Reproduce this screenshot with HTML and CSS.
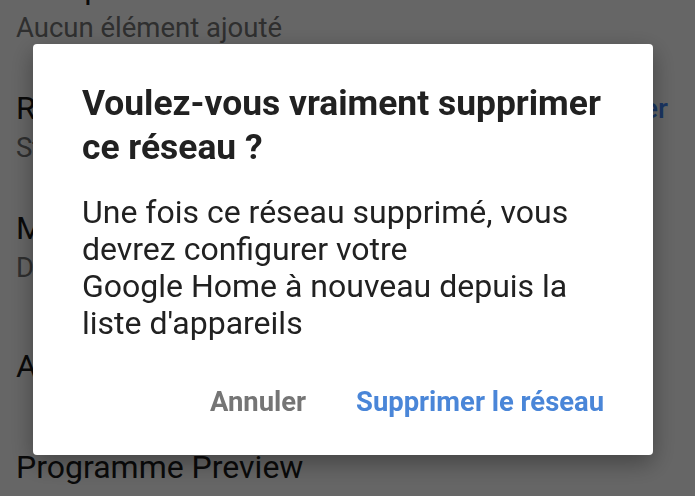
FILE: index.html
```html
<!DOCTYPE html>
<html>
<head>
  <title>Paramètres du réseau</title>
  <meta charset="utf-8">
  <link rel="stylesheet" href="styles.css">
</head>
<body>
  <div class="list">
    <div class="item">
      <div class="text">
        <div class="title">Groupes</div>
        <div class="sub">Aucun élément ajouté</div>
      </div>
    </div>
    <div class="item">
      <div class="text">
        <div class="title">Réseau invité</div>
        <div class="sub">Statut : désactivé</div>
      </div>
      <span class="action">Configurer</span>
    </div>
    <div class="item">
      <div class="text">
        <div class="title">Mises à jour</div>
        <div class="sub">Désactivées</div>
      </div>
    </div>
    <div class="item single">
      <div class="title">Aide et commentaires</div>
    </div>
    <div class="item single">
      <div class="title">Programme Preview</div>
    </div>
  </div>

  <div class="overlay">
    <div class="dialog">
      <h2 class="dialog-title">Voulez-vous vraiment supprimer<br>ce réseau ?</h2>
      <p class="dialog-body">Une fois ce réseau supprimé, vous<br>devrez configurer votre<br>Google Home à nouveau depuis la<br>liste d'appareils</p>
      <div class="dialog-actions">
        <span class="btn cancel">Annuler</span>
        <span class="btn confirm">Supprimer le réseau</span>
      </div>
    </div>
  </div>
</body>
</html>
```

FILE: styles.css
```css
body {
  margin: 0;
  background-color: #fff;
  font-family: Roboto, "Liberation Sans", sans-serif;
  overflow: hidden;
}
.list {
  margin-top: -51px;
}
.item {
  display: flex;
  align-items: center;
  justify-content: space-between;
  padding: 20px 27px 20px 16px;
}
.item.single {
  padding-top: 38px;
  padding-bottom: 25px;
}
.title {
  font-size: 32px;
  line-height: 38px;
  color: #1a1a1a;
  white-space: nowrap;
}
.sub {
  font-size: 27.5px;
  line-height: 42px;
  color: #757575;
  white-space: nowrap;
}
.action {
  font-size: 28px;
  font-weight: 500;
  color: #4285f4;
  margin-top: -42px;
}
.overlay {
  position: fixed;
  top: 0;
  left: 0;
  right: 0;
  bottom: 0;
  background-color: rgba(0, 0, 0, 0.6);
  padding: 44px 0 0 33px;
}
.dialog {
  width: 620px;
  height: 411px;
  box-sizing: border-box;
  background-color: #fff;
  border-radius: 4px;
  box-shadow: 0 8px 24px rgba(0, 0, 0, 0.35);
  padding: 37px 40px 0 49px;
}
.dialog-title {
  margin: 0;
  font-size: 35.4px;
  line-height: 44px;
  font-weight: 700;
  color: #212121;
  white-space: nowrap;
}
.dialog-body {
  margin: 25px 0 0 0;
  font-size: 32px;
  line-height: 37px;
  color: #212121;
  white-space: nowrap;
}
.dialog-actions {
  display: flex;
  justify-content: flex-end;
  gap: 50px;
  margin-top: 42px;
  padding-right: 9px;
}
.btn {
  font-size: 27.4px;
  line-height: 36px;
  font-weight: 700;
}
.cancel {
  color: #757575;
}
.confirm {
  color: #4a86d8;
}
```
